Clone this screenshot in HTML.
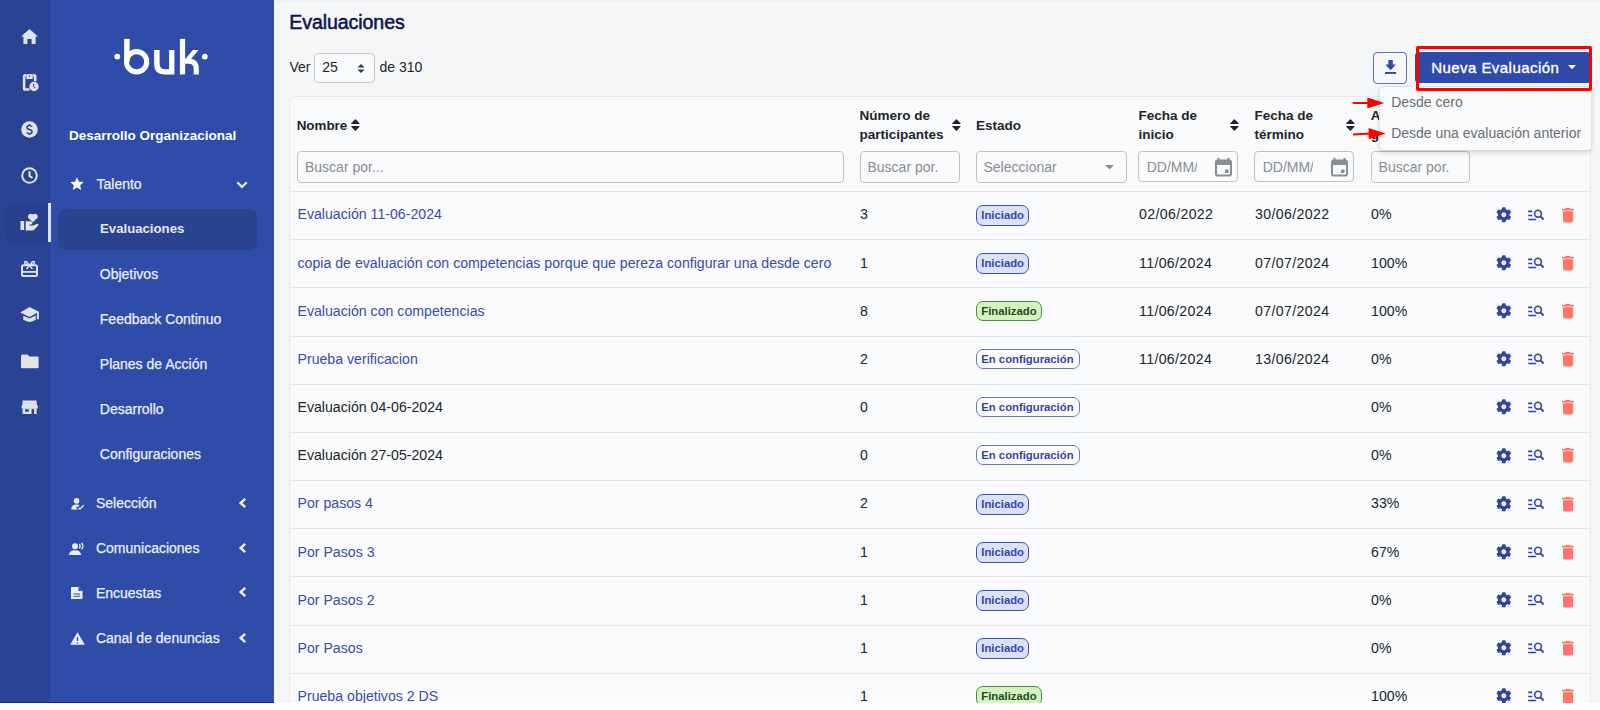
<!DOCTYPE html>
<html><head><meta charset="utf-8"><title>Evaluaciones</title>
<style>
html,body{margin:0;padding:0;width:1600px;height:710px;overflow:hidden;background:#fff}
body{position:relative;font-family:"Liberation Sans", sans-serif}
.t{position:absolute;white-space:nowrap;line-height:1;font-family:"Liberation Sans", sans-serif}
svg{overflow:visible}
</style></head><body>
<div style="position:absolute;left:0;top:0;width:1600px;height:703px;overflow:hidden">
<div style="position:absolute;left:0px;top:0px;width:1600px;height:710px;background:#ffffff"></div>
<div style="position:absolute;left:274px;top:0px;width:1326px;height:703px;background:#f5f6f8"></div>
<div style="position:absolute;left:274px;top:0px;width:1326px;height:1.5px;background:#eeeff2"></div>
<div style="position:absolute;left:274px;top:0px;width:2px;height:703px;background:#fafbfc"></div>
<div style="position:absolute;left:0px;top:0px;width:50px;height:703px;background:#2b4394"></div>
<div style="position:absolute;left:50px;top:0px;width:224px;height:703px;background:#2f4da8"></div>
<div style="position:absolute;left:0px;top:702px;width:274px;height:1px;background:#0c22a0"></div>
<div style="position:absolute;left:5px;top:203px;width:43px;height:39px;background:#283f8c;border-radius:8px 0 0 8px"></div>
<div style="position:absolute;left:47.5px;top:203px;width:3px;height:39px;background:#dfe1e6"></div>
<svg style="position:absolute;left:21px;top:29px;" width="17" height="15" viewBox="0 0 17 15"><path d="M8.5 0 L17 7.6 H14.6 V15 H10.6 V10 H6.4 V15 H2.4 V7.6 H0 Z" fill="#e1e3ea"/></svg>
<svg style="position:absolute;left:16px;top:66px;" width="28" height="32" viewBox="0 0 28 32"><path d="M13.5 23.5 H9.4 Q8.1 23.5 8.1 22.2 V10.5 Q8.1 9.2 9.4 9.2 H10.5 M16.6 9.2 H17.9 Q19.2 9.2 19.2 10.5 V15.3" fill="none" stroke="#e1e3ea" stroke-width="2.6"/><path d="M10.4 13.1 V9.5 Q10.4 7.9 12 7.9 H15.1 Q16.7 7.9 16.7 9.5 V13.1 Z" fill="#e1e3ea"/><circle cx="13.55" cy="10" r="0.75" fill="#2b4394"/><circle cx="18" cy="20.5" r="4.7" fill="#e1e3ea"/><path d="M17.6 17.8 V20.8 L19.4 22.2" fill="none" stroke="#2b4394" stroke-width="1"/></svg>
<svg style="position:absolute;left:21px;top:121px;" width="17" height="17" viewBox="0 0 17 17"><circle cx="8.5" cy="8.5" r="8.3" fill="#e1e3ea"/><path d="M10.9 5.6 Q10.2 4.4 8.4 4.4 Q6 4.4 6 6.4 Q6 8 8.5 8.5 Q11 9 11 10.7 Q11 12.7 8.5 12.7 Q6.6 12.7 5.9 11.4 M8.5 3 V4.4 M8.5 12.7 V14" fill="none" stroke="#2b4394" stroke-width="1.5"/></svg>
<svg style="position:absolute;left:21px;top:167px;" width="17" height="17" viewBox="0 0 17 17"><circle cx="8.5" cy="8.5" r="7.3" fill="none" stroke="#e1e3ea" stroke-width="2"/><path d="M8.5 4.3 V9 L11.5 11" fill="none" stroke="#e1e3ea" stroke-width="2"/></svg>
<svg style="position:absolute;left:16px;top:208px;" width="28" height="28" viewBox="0 0 28 28"><path d="M16.85 14.3 L12.2 9.9 A2.95 2.95 0 0 1 16.85 6.5 A2.95 2.95 0 0 1 21.5 9.9 Z" fill="#e1e3ea"/><rect x="4.5" y="13" width="3.6" height="9.1" rx="0.4" fill="#e1e3ea"/><path d="M9.7 13.2 H14.4 Q16.4 13.3 16.4 15.1 Q16.3 16.6 14.8 16.6 H13.4 V17.5 H17.6 L20.4 15.9 Q21.7 15.3 22.3 16.3 Q22.7 17.2 21.8 18.1 L18.4 21.4 Q17.4 22.5 16 22.5 H9.7 Z" fill="#e1e3ea"/></svg>
<svg style="position:absolute;left:21px;top:260px;" width="17" height="17" viewBox="0 0 17 17"><rect x="1" y="5.2" width="15" height="10.8" rx="1.5" fill="none" stroke="#e1e3ea" stroke-width="2"/><rect x="1" y="11" width="15" height="1.8" fill="#e1e3ea"/><path d="M8.5 5.5 L5.8 2 Q4.7 0.8 3.8 1.8 Q3 2.8 4.2 3.8 L8.5 5.5 L12.8 3.8 Q14 2.8 13.2 1.8 Q12.3 0.8 11.2 2 Z M8.5 5.5 L5.5 9 M8.5 5.5 L11.5 9" fill="none" stroke="#e1e3ea" stroke-width="1.4"/></svg>
<svg style="position:absolute;left:16px;top:300px;" width="28" height="28" viewBox="0 0 28 28"><path d="M13.6 6.9 L22.9 11.7 L13.6 17 L4.3 12.6 Z" fill="#e1e3ea"/><rect x="20.9" y="11.8" width="2" height="7.5" fill="#e1e3ea"/><path d="M7.3 15.8 L13.6 18.6 L19.7 15.6 V19.8 Q13.6 24 7.3 19.8 Z" fill="#e1e3ea"/></svg>
<svg style="position:absolute;left:21px;top:354px;" width="18" height="15" viewBox="0 0 18 15"><path d="M0 2 Q0 0.5 1.5 0.5 H6.5 L8.5 2.6 H16.3 Q17.6 2.6 17.6 4 V13 Q17.6 14.3 16.3 14.3 H1.5 Q0 14.3 0 13 Z" fill="#e1e3ea"/></svg>
<svg style="position:absolute;left:18px;top:396px;" width="24" height="22" viewBox="0 0 24 22"><path d="M4.6 4.6 H18.6 V7.4 L19.8 10.4 V12.4 H3.6 V10.4 L4.6 7.4 Z" fill="#e1e3ea"/><path d="M4.6 12.2 H18.6 V18 H4.6 Z M7.1 13.3 V15.8 H10.8 V13.3 Z M13.6 13 V18 H16.1 V13 Z" fill="#e1e3ea" fill-rule="evenodd"/><rect x="4.6" y="7.1" width="14" height="0.5" fill="#c9cde0"/></svg>
<svg style="position:absolute;left:100px;top:30px;" width="130" height="60" viewBox="0 0 130 60"><circle cx="17.3" cy="26.6" r="2.9" fill="#ffffff"/><circle cx="104.8" cy="26.6" r="2.9" fill="#ffffff"/><rect x="24.1" y="8.9" width="5.5" height="23" fill="#ffffff"/><circle cx="36.6" cy="31.75" r="10.15" fill="none" stroke="#ffffff" stroke-width="5.1"/><path d="M54.1 19.9 H59.6 V33.5 Q59.6 39.2 64.6 39.2 H69.1 V19.9 H74.4 V44.4 H64.4 Q54.1 44.4 54.1 34 Z" fill="#ffffff"/><rect x="79.9" y="8.9" width="5.2" height="35.5" fill="#ffffff"/><path d="M85 29.4 L92.8 19.9 H98.6 L89.6 30.6 Z" fill="#ffffff"/><path d="M85 28.8 H89 Q98.9 28.8 98.9 38.5 V44.4 H93.7 V38.8 Q93.7 33.8 88.8 33.8 H85 Z" fill="#ffffff"/></svg>
<div class="t" style="left:69px;top:128.57px;font-size:13.5px;font-weight:700;color:#ffffff;">Desarrollo Organizacional</div>
<svg style="position:absolute;left:70px;top:177px;" width="14" height="14" viewBox="0 0 14 14"><path d="M7 0.3 L8.9 4.7 L13.7 5.1 L10.1 8.3 L11.2 13 L7 10.5 L2.8 13 L3.9 8.3 L0.3 5.1 L5.1 4.7 Z" fill="#ffffff"/></svg>
<div class="t" style="left:96.5px;top:177.15px;font-size:14px;font-weight:400;color:#eceef5;-webkit-text-stroke:0.25px #eceef5">Talento</div>
<svg style="position:absolute;left:235.5px;top:180.5px;" width="12" height="8" viewBox="0 0 12 8"><path d="M1.3 1.3 L6 6 L10.7 1.3" fill="none" stroke="#eceef5" stroke-width="2.2"/></svg>
<div style="position:absolute;left:58px;top:209px;width:199px;height:41px;background:#2a4391;border-radius:8px"></div>
<div class="t" style="left:100px;top:221.83px;font-size:13.2px;font-weight:700;color:#e4e6ee;">Evaluaciones</div>
<div class="t" style="left:99.8px;top:267.35px;font-size:14px;font-weight:400;color:#eceef5;-webkit-text-stroke:0.25px #eceef5">Objetivos</div>
<div class="t" style="left:99.8px;top:311.95px;font-size:14px;font-weight:400;color:#eceef5;-webkit-text-stroke:0.25px #eceef5">Feedback Continuo</div>
<div class="t" style="left:99.8px;top:357.05px;font-size:14px;font-weight:400;color:#eceef5;-webkit-text-stroke:0.25px #eceef5">Planes de Acción</div>
<div class="t" style="left:99.8px;top:401.95px;font-size:14px;font-weight:400;color:#eceef5;-webkit-text-stroke:0.25px #eceef5">Desarrollo</div>
<div class="t" style="left:99.8px;top:446.95px;font-size:14px;font-weight:400;color:#eceef5;-webkit-text-stroke:0.25px #eceef5">Configuraciones</div>
<div class="t" style="left:95.9px;top:496.35px;font-size:14px;font-weight:400;color:#eceef5;-webkit-text-stroke:0.25px #eceef5">Selección</div>
<svg style="position:absolute;left:237.5px;top:498.0px;" width="9" height="10" viewBox="0 0 9 10"><path d="M7.2 0.9 L2.6 5 L7.2 9.1" fill="none" stroke="#eceef5" stroke-width="2.4"/></svg>
<div class="t" style="left:95.9px;top:541.45px;font-size:14px;font-weight:400;color:#eceef5;-webkit-text-stroke:0.25px #eceef5">Comunicaciones</div>
<svg style="position:absolute;left:237.5px;top:543.0999999999999px;" width="9" height="10" viewBox="0 0 9 10"><path d="M7.2 0.9 L2.6 5 L7.2 9.1" fill="none" stroke="#eceef5" stroke-width="2.4"/></svg>
<div class="t" style="left:95.9px;top:585.75px;font-size:14px;font-weight:400;color:#eceef5;-webkit-text-stroke:0.25px #eceef5">Encuestas</div>
<svg style="position:absolute;left:237.5px;top:587.4px;" width="9" height="10" viewBox="0 0 9 10"><path d="M7.2 0.9 L2.6 5 L7.2 9.1" fill="none" stroke="#eceef5" stroke-width="2.4"/></svg>
<div class="t" style="left:95.9px;top:631.25px;font-size:14px;font-weight:400;color:#eceef5;-webkit-text-stroke:0.25px #eceef5">Canal de denuncias</div>
<svg style="position:absolute;left:237.5px;top:632.9px;" width="9" height="10" viewBox="0 0 9 10"><path d="M7.2 0.9 L2.6 5 L7.2 9.1" fill="none" stroke="#eceef5" stroke-width="2.4"/></svg>
<svg style="position:absolute;left:70.5px;top:497.8px;" width="14" height="11.5" viewBox="0 0 14 12"><circle cx="5.5" cy="3" r="2.9" fill="#eceef5"/><path d="M0 11.5 Q0 6.8 5.5 6.8 Q7.5 6.8 8.5 7.4 L7 9.5 L6.2 8.8 L5 10 L7 12 H0 Z" fill="#eceef5"/><path d="M7.5 10 L9 11.5 L13 7.5" fill="none" stroke="#eceef5" stroke-width="1.3"/></svg>
<svg style="position:absolute;left:69px;top:542.5px;" width="16" height="12" viewBox="0 0 16 12"><circle cx="6" cy="3.3" r="3" fill="#eceef5"/><path d="M0 12 Q0 7.3 6 7.3 Q12 7.3 12 12 Z" fill="#eceef5"/><path d="M10.3 1 Q12 3.2 10.3 5.4 M12.6 0 Q15.2 3.2 12.6 6.4" fill="none" stroke="#eceef5" stroke-width="1.3"/></svg>
<svg style="position:absolute;left:70.8px;top:586.8px;" width="12" height="12" viewBox="0 0 12 12"><path d="M0 0.5 Q0 0 0.5 0 H7.5 L11.5 4 V11.5 Q11.5 12 11 12 H0.5 Q0 12 0 11.5 Z" fill="#eceef5"/><path d="M7.5 0 V4 H11.5" fill="#2f4da8"/><path d="M2.5 7 H9 M2.5 9.3 H9" stroke="#2f4da8" stroke-width="1"/></svg>
<svg style="position:absolute;left:69.5px;top:631.5px;" width="15" height="13" viewBox="0 0 15 13"><path d="M7.5 0.3 L14.8 12.8 H0.2 Z" fill="#eceef5"/><path d="M7.5 5 V9 M7.5 10.2 V11.4" stroke="#2f4da8" stroke-width="1.3"/></svg>
<div class="t" style="left:289.3px;top:12.51px;font-size:19.6px;font-weight:400;color:#0f1650;letter-spacing:-0.1px;-webkit-text-stroke:0.55px #0f1650">Evaluaciones</div>
<div class="t" style="left:289.5px;top:59.75px;font-size:14px;font-weight:400;color:#212529;">Ver</div>
<div style="position:absolute;left:313.5px;top:52.5px;width:61.8px;height:30.8px;box-sizing:border-box;border:1px solid #c4c6ca;border-radius:4px;background:#f9fafc"></div>
<div class="t" style="left:322.3px;top:60.15px;font-size:14px;font-weight:400;color:#212529;">25</div>
<svg style="position:absolute;left:356.5px;top:64px;" width="8" height="9" viewBox="0 0 8 9"><path d="M4 0 L7.5 3.6 H0.5 Z M4 9 L7.5 5.4 H0.5 Z" fill="#343a40"/></svg>
<div class="t" style="left:379.5px;top:59.75px;font-size:14px;font-weight:400;color:#212529;">de 310</div>
<div style="position:absolute;left:1373.4px;top:52.2px;width:33.8px;height:31.7px;box-sizing:border-box;border:1px solid #5b6fc4;border-radius:4px;background:#f6f7fb"></div>
<svg style="position:absolute;left:1384px;top:60px;" width="14" height="14" viewBox="0 0 14 14"><path d="M4.4 0.1 H8.8 V4.4 H11.9 L6.6 10.3 L1.3 4.4 H4.4 Z" fill="#2f4aa8"/><rect x="1" y="12" width="11.2" height="1.9" fill="#2f4aa8"/></svg>
<div style="position:absolute;left:1415px;top:51.6px;width:174.2px;height:31.7px;background:#2f4aa8;border-radius:4px 1px 1px 4px"></div>
<div class="t" style="left:1431.2px;top:59.90px;font-size:15px;font-weight:400;color:#ffffff;letter-spacing:0.45px;-webkit-text-stroke:0.35px #fff">Nueva Evaluación</div>
<svg style="position:absolute;left:1568px;top:64.5px;" width="8" height="5" viewBox="0 0 8 5"><path d="M0 0 H8 L4 4.2 Z" fill="#fff"/></svg>
<div style="position:absolute;left:288.5px;top:96.2px;width:1302.4px;height:620px;box-sizing:border-box;border:1px solid #e6e8ec;border-radius:8px;background:#f9fafc"></div>
<div class="t" style="left:296.7px;top:118.96px;font-size:13.4px;font-weight:700;color:#212529;">Nombre</div>
<svg style="position:absolute;left:351px;top:119.1px;" width="8.8" height="12" viewBox="0 0 8.8 12"><path d="M4.4 0.2 Q4.1 0.2 3.9 0.5 L0.1 4.6 Q-0.1 5 0.4 5 H8.4 Q8.9 5 8.7 4.6 L4.9 0.5 Q4.7 0.2 4.4 0.2 Z M4.4 11.8 Q4.1 11.8 3.9 11.5 L0.1 7.4 Q-0.1 7 0.4 7 H8.4 Q8.9 7 8.7 7.4 L4.9 11.5 Q4.7 11.8 4.4 11.8 Z" fill="#212529"/></svg>
<div class="t" style="left:859.5px;top:109.07px;font-size:13.5px;font-weight:700;color:#212529;">Número de</div>
<div class="t" style="left:859.5px;top:127.87px;font-size:13.5px;font-weight:700;color:#212529;">participantes</div>
<svg style="position:absolute;left:951.8px;top:119px;" width="8.8" height="12" viewBox="0 0 8.8 12"><path d="M4.4 0.2 Q4.1 0.2 3.9 0.5 L0.1 4.6 Q-0.1 5 0.4 5 H8.4 Q8.9 5 8.7 4.6 L4.9 0.5 Q4.7 0.2 4.4 0.2 Z M4.4 11.8 Q4.1 11.8 3.9 11.5 L0.1 7.4 Q-0.1 7 0.4 7 H8.4 Q8.9 7 8.7 7.4 L4.9 11.5 Q4.7 11.8 4.4 11.8 Z" fill="#212529"/></svg>
<div class="t" style="left:976px;top:118.77px;font-size:13.5px;font-weight:700;color:#212529;">Estado</div>
<div class="t" style="left:1138.5px;top:109.27px;font-size:13.5px;font-weight:700;color:#212529;">Fecha de</div>
<div class="t" style="left:1138.5px;top:127.87px;font-size:13.5px;font-weight:700;color:#212529;">inicio</div>
<svg style="position:absolute;left:1230.4px;top:119px;" width="8.8" height="12" viewBox="0 0 8.8 12"><path d="M4.4 0.2 Q4.1 0.2 3.9 0.5 L0.1 4.6 Q-0.1 5 0.4 5 H8.4 Q8.9 5 8.7 4.6 L4.9 0.5 Q4.7 0.2 4.4 0.2 Z M4.4 11.8 Q4.1 11.8 3.9 11.5 L0.1 7.4 Q-0.1 7 0.4 7 H8.4 Q8.9 7 8.7 7.4 L4.9 11.5 Q4.7 11.8 4.4 11.8 Z" fill="#212529"/></svg>
<div class="t" style="left:1254.5px;top:109.27px;font-size:13.5px;font-weight:700;color:#212529;">Fecha de</div>
<div class="t" style="left:1254.5px;top:127.87px;font-size:13.5px;font-weight:700;color:#212529;">término</div>
<svg style="position:absolute;left:1346.4px;top:119px;" width="8.8" height="12" viewBox="0 0 8.8 12"><path d="M4.4 0.2 Q4.1 0.2 3.9 0.5 L0.1 4.6 Q-0.1 5 0.4 5 H8.4 Q8.9 5 8.7 4.6 L4.9 0.5 Q4.7 0.2 4.4 0.2 Z M4.4 11.8 Q4.1 11.8 3.9 11.5 L0.1 7.4 Q-0.1 7 0.4 7 H8.4 Q8.9 7 8.7 7.4 L4.9 11.5 Q4.7 11.8 4.4 11.8 Z" fill="#212529"/></svg>
<div class="t" style="left:1370.8px;top:109.27px;font-size:13.5px;font-weight:700;color:#212529;">Avance</div>
<div class="t" style="left:1370.8px;top:127.87px;font-size:13.5px;font-weight:700;color:#212529;">general</div>
<div style="position:absolute;left:297px;top:151.3px;width:547px;height:31.7px;box-sizing:border-box;border:1px solid #bfc1c5;border-radius:4px;background:#f9fafc"></div>
<div class="t" style="left:305px;top:160.35px;font-size:14px;font-weight:400;color:#8a8d92;">Buscar por...</div>
<div style="position:absolute;left:859.5px;top:151.3px;width:100.8px;height:31.7px;box-sizing:border-box;border:1px solid #bfc1c5;border-radius:4px;background:#f9fafc"></div>
<div class="t" style="left:867.5px;top:160.35px;font-size:14px;font-weight:400;color:#8a8d92;">Buscar por.</div>
<div style="position:absolute;left:975.5px;top:151.3px;width:151.2px;height:31.7px;box-sizing:border-box;border:1px solid #bfc1c5;border-radius:4px;background:#f9fafc"></div>
<div class="t" style="left:983.5px;top:160.35px;font-size:14px;font-weight:400;color:#8a8d92;">Seleccionar</div>
<svg style="position:absolute;left:1104.5px;top:165px;" width="9" height="5" viewBox="0 0 9 5"><path d="M0 0 H9 L4.5 4.6 Z" fill="#8a8d92"/></svg>
<div style="position:absolute;left:1138.3px;top:151.3px;width:100.2px;height:31.2px;box-sizing:border-box;border:1px solid #bfc1c5;border-radius:4px;background:#f9fafc"></div>
<div style="position:absolute;left:1146.7px;top:160px;width:50px;height:16px;overflow:hidden"><div class="t" style="left:0;top:0.35px;font-size:14px;color:#8a8d92">DD/MM/AAAA</div></div>
<svg style="position:absolute;left:1214.8px;top:157.5px;" width="17" height="18.5" viewBox="0 0 17 18.5"><path d="M3.5 0 V3 M13.5 0 V3" stroke="#8a8d92" stroke-width="2.2"/><rect x="1" y="2.5" width="15" height="15" rx="1.8" fill="none" stroke="#8a8d92" stroke-width="2"/><rect x="1" y="2.5" width="15" height="4.5" fill="#8a8d92"/><rect x="10" y="11.5" width="3.5" height="3.5" fill="#8a8d92"/></svg>
<div style="position:absolute;left:1254.3px;top:151.3px;width:100.2px;height:31.2px;box-sizing:border-box;border:1px solid #bfc1c5;border-radius:4px;background:#f9fafc"></div>
<div style="position:absolute;left:1262.7px;top:160px;width:50px;height:16px;overflow:hidden"><div class="t" style="left:0;top:0.35px;font-size:14px;color:#8a8d92">DD/MM/AAAA</div></div>
<svg style="position:absolute;left:1330.8px;top:157.5px;" width="17" height="18.5" viewBox="0 0 17 18.5"><path d="M3.5 0 V3 M13.5 0 V3" stroke="#8a8d92" stroke-width="2.2"/><rect x="1" y="2.5" width="15" height="15" rx="1.8" fill="none" stroke="#8a8d92" stroke-width="2"/><rect x="1" y="2.5" width="15" height="4.5" fill="#8a8d92"/><rect x="10" y="11.5" width="3.5" height="3.5" fill="#8a8d92"/></svg>
<div style="position:absolute;left:1370.6px;top:151.3px;width:99.9px;height:31.7px;box-sizing:border-box;border:1px solid #bfc1c5;border-radius:4px;background:#f9fafc"></div>
<div class="t" style="left:1378.6px;top:160.35px;font-size:14px;font-weight:400;color:#8a8d92;">Buscar por.</div>
<div style="position:absolute;left:289.5px;top:191.0px;width:1300.5px;height:1px;background:#e3e5e9"></div>
<div class="t" style="left:297.5px;top:207.42px;font-size:14.15px;font-weight:400;color:#3a4da6;">Evaluación 11-06-2024</div>
<div class="t" style="left:860px;top:207.42px;font-size:14.15px;font-weight:400;color:#212529;">3</div>
<div style="position:absolute;left:976.2px;top:204.9px;width:53.1px;height:21px;box-sizing:border-box;border:1px solid #3f54b0;border-radius:7px;background:#dbe2f8"></div>
<div class="t" style="left:981.3px;top:209.53px;font-size:11.3px;font-weight:700;color:#3447a6;">Iniciado</div>
<div class="t" style="left:1139px;top:207.42px;font-size:14.15px;font-weight:400;color:#212529;letter-spacing:0.35px">02/06/2022</div>
<div class="t" style="left:1255.1px;top:207.42px;font-size:14.15px;font-weight:400;color:#212529;letter-spacing:0.35px">30/06/2022</div>
<div class="t" style="left:1371.1px;top:207.42px;font-size:14.15px;font-weight:400;color:#212529;">0%</div>
<svg style="position:absolute;left:1495.85px;top:206.7px;" width="15.6" height="15.6" viewBox="0 0 512 512"><path d="M487.4 315.7l-42.6-24.6c4.3-23.2 4.3-47 0-70.2l42.6-24.6c4.9-2.8 7.1-8.6 5.5-14-11.1-35.6-30-67.8-54.7-94.6-3.8-4.1-10-5.1-14.8-2.3L380.8 110c-17.9-15.4-38.5-27.3-60.8-35.1V25.8c0-5.6-3.9-10.5-9.4-11.7-36.7-8.200-74.3-7.8-109.2 0-5.5 1.2-9.4 6.1-9.4 11.7V75c-22.2 7.9-42.8 19.8-60.8 35.1L88.7 85.5c-4.9-2.8-11-1.9-14.8 2.3-24.7 26.7-43.6 58.9-54.7 94.6-1.7 5.4.6 11.2 5.5 14L67.3 221c-4.3 23.2-4.3 47 0 70.2l-42.6 24.6c-4.9 2.8-7.1 8.6-5.5 14 11.1 35.6 30 67.8 54.7 94.6 3.8 4.1 10 5.100 14.8 2.3l42.6-24.6c17.9 15.4 38.5 27.3 60.8 35.1v49.2c0 5.6 3.9 10.5 9.4 11.7 36.7 8.2 74.3 7.8 109.2 0 5.5-1.2 9.4-6.1 9.4-11.7v-49.2c22.2-7.9 42.8-19.8 60.8-35.1l42.6 24.6c4.9 2.8 11 1.9 14.8-2.3 24.7-26.7 43.6-58.9 54.7-94.6 1.5-5.5-.7-11.3-5.6-14.1zM256 336c-44.1 0-80-35.9-80-80s35.9-80 80-80 80 35.9 80 80-35.9 80-80 80z" fill="#2d45a6"/></svg>
<svg style="position:absolute;left:1527.5px;top:209.6px;" width="17" height="11" viewBox="0 0 17 11"><path d="M0.2 1.4 H4.2 M0.2 5.5 H4.2 M0.2 9.5 H8.1" stroke="#2d45a6" stroke-width="1.6"/><circle cx="10" cy="3.7" r="3.4" fill="none" stroke="#2d45a6" stroke-width="1.6"/><path d="M12.4 6.3 L15.6 9.5" stroke="#2d45a6" stroke-width="1.8"/></svg>
<svg style="position:absolute;left:1562px;top:207.5px;" width="12" height="14.6" viewBox="0 0 12 14.6"><rect x="3.3" y="0" width="5" height="1.6" rx="0.7" fill="#fe7469"/><rect x="0" y="0.8" width="11.8" height="1.8" rx="0.6" fill="#fe7469"/><path d="M1 3.2 H11.1 V12.4 Q11.1 14.5 9 14.5 H3.1 Q1 14.5 1 12.4 Z" fill="#fe7469"/></svg>
<div style="position:absolute;left:289.5px;top:239.17000000000002px;width:1300.5px;height:1px;background:#e3e5e9"></div>
<div class="t" style="left:297.5px;top:255.59px;font-size:14.15px;font-weight:400;color:#3a4da6;">copia de evaluación con competencias porque que pereza configurar una desde cero</div>
<div class="t" style="left:860px;top:255.59px;font-size:14.15px;font-weight:400;color:#212529;">1</div>
<div style="position:absolute;left:976.2px;top:253.07px;width:53.1px;height:21px;box-sizing:border-box;border:1px solid #3f54b0;border-radius:7px;background:#dbe2f8"></div>
<div class="t" style="left:981.3px;top:257.70px;font-size:11.3px;font-weight:700;color:#3447a6;">Iniciado</div>
<div class="t" style="left:1139px;top:255.59px;font-size:14.15px;font-weight:400;color:#212529;letter-spacing:0.35px">11/06/2024</div>
<div class="t" style="left:1255.1px;top:255.59px;font-size:14.15px;font-weight:400;color:#212529;letter-spacing:0.35px">07/07/2024</div>
<div class="t" style="left:1371.1px;top:255.59px;font-size:14.15px;font-weight:400;color:#212529;">100%</div>
<svg style="position:absolute;left:1495.85px;top:254.86999999999998px;" width="15.6" height="15.6" viewBox="0 0 512 512"><path d="M487.4 315.7l-42.6-24.6c4.3-23.2 4.3-47 0-70.2l42.6-24.6c4.9-2.8 7.1-8.6 5.5-14-11.1-35.6-30-67.8-54.7-94.6-3.8-4.1-10-5.1-14.8-2.3L380.8 110c-17.9-15.4-38.5-27.3-60.8-35.1V25.8c0-5.6-3.9-10.5-9.4-11.7-36.7-8.200-74.3-7.8-109.2 0-5.5 1.2-9.4 6.1-9.4 11.7V75c-22.2 7.9-42.8 19.8-60.8 35.1L88.7 85.5c-4.9-2.8-11-1.9-14.8 2.3-24.7 26.7-43.6 58.9-54.7 94.6-1.7 5.4.6 11.2 5.5 14L67.3 221c-4.3 23.2-4.3 47 0 70.2l-42.6 24.6c-4.9 2.8-7.1 8.6-5.5 14 11.1 35.6 30 67.8 54.7 94.6 3.8 4.1 10 5.100 14.8 2.3l42.6-24.6c17.9 15.4 38.5 27.3 60.8 35.1v49.2c0 5.6 3.9 10.5 9.4 11.7 36.7 8.2 74.3 7.8 109.2 0 5.5-1.2 9.4-6.1 9.4-11.7v-49.2c22.2-7.9 42.8-19.8 60.8-35.1l42.6 24.6c4.9 2.8 11 1.9 14.8-2.3 24.7-26.7 43.6-58.9 54.7-94.6 1.5-5.5-.7-11.3-5.6-14.1zM256 336c-44.1 0-80-35.9-80-80s35.9-80 80-80 80 35.9 80 80-35.9 80-80 80z" fill="#2d45a6"/></svg>
<svg style="position:absolute;left:1527.5px;top:257.77px;" width="17" height="11" viewBox="0 0 17 11"><path d="M0.2 1.4 H4.2 M0.2 5.5 H4.2 M0.2 9.5 H8.1" stroke="#2d45a6" stroke-width="1.6"/><circle cx="10" cy="3.7" r="3.4" fill="none" stroke="#2d45a6" stroke-width="1.6"/><path d="M12.4 6.3 L15.6 9.5" stroke="#2d45a6" stroke-width="1.8"/></svg>
<svg style="position:absolute;left:1562px;top:255.67px;" width="12" height="14.6" viewBox="0 0 12 14.6"><rect x="3.3" y="0" width="5" height="1.6" rx="0.7" fill="#fe7469"/><rect x="0" y="0.8" width="11.8" height="1.8" rx="0.6" fill="#fe7469"/><path d="M1 3.2 H11.1 V12.4 Q11.1 14.5 9 14.5 H3.1 Q1 14.5 1 12.4 Z" fill="#fe7469"/></svg>
<div style="position:absolute;left:289.5px;top:287.34000000000003px;width:1300.5px;height:1px;background:#e3e5e9"></div>
<div class="t" style="left:297.5px;top:303.76px;font-size:14.15px;font-weight:400;color:#3a4da6;">Evaluación con competencias</div>
<div class="t" style="left:860px;top:303.76px;font-size:14.15px;font-weight:400;color:#212529;">8</div>
<div style="position:absolute;left:976.4px;top:300.74px;width:65.3px;height:19.8px;box-sizing:border-box;border:1px solid #4f8a4b;border-radius:7px;background:#d4f4bf"></div>
<div class="t" style="left:981.3px;top:305.87px;font-size:11.3px;font-weight:700;color:#1f4a1f;">Finalizado</div>
<div class="t" style="left:1139px;top:303.76px;font-size:14.15px;font-weight:400;color:#212529;letter-spacing:0.35px">11/06/2024</div>
<div class="t" style="left:1255.1px;top:303.76px;font-size:14.15px;font-weight:400;color:#212529;letter-spacing:0.35px">07/07/2024</div>
<div class="t" style="left:1371.1px;top:303.76px;font-size:14.15px;font-weight:400;color:#212529;">100%</div>
<svg style="position:absolute;left:1495.85px;top:303.04px;" width="15.6" height="15.6" viewBox="0 0 512 512"><path d="M487.4 315.7l-42.6-24.6c4.3-23.2 4.3-47 0-70.2l42.6-24.6c4.9-2.8 7.1-8.6 5.5-14-11.1-35.6-30-67.8-54.7-94.6-3.8-4.1-10-5.1-14.8-2.3L380.8 110c-17.9-15.4-38.5-27.3-60.8-35.1V25.8c0-5.6-3.9-10.5-9.4-11.7-36.7-8.200-74.3-7.8-109.2 0-5.5 1.2-9.4 6.1-9.4 11.7V75c-22.2 7.9-42.8 19.8-60.8 35.1L88.7 85.5c-4.9-2.8-11-1.9-14.8 2.3-24.7 26.7-43.6 58.9-54.7 94.6-1.7 5.4.6 11.2 5.5 14L67.3 221c-4.3 23.2-4.3 47 0 70.2l-42.6 24.6c-4.9 2.8-7.1 8.6-5.5 14 11.1 35.6 30 67.8 54.7 94.6 3.8 4.1 10 5.100 14.8 2.3l42.6-24.6c17.9 15.4 38.5 27.3 60.8 35.1v49.2c0 5.6 3.9 10.5 9.4 11.7 36.7 8.2 74.3 7.8 109.2 0 5.5-1.2 9.4-6.1 9.4-11.7v-49.2c22.2-7.9 42.8-19.8 60.8-35.1l42.6 24.6c4.9 2.8 11 1.9 14.8-2.3 24.7-26.7 43.6-58.9 54.7-94.6 1.5-5.5-.7-11.3-5.6-14.1zM256 336c-44.1 0-80-35.9-80-80s35.9-80 80-80 80 35.9 80 80-35.9 80-80 80z" fill="#2d45a6"/></svg>
<svg style="position:absolute;left:1527.5px;top:305.94px;" width="17" height="11" viewBox="0 0 17 11"><path d="M0.2 1.4 H4.2 M0.2 5.5 H4.2 M0.2 9.5 H8.1" stroke="#2d45a6" stroke-width="1.6"/><circle cx="10" cy="3.7" r="3.4" fill="none" stroke="#2d45a6" stroke-width="1.6"/><path d="M12.4 6.3 L15.6 9.5" stroke="#2d45a6" stroke-width="1.8"/></svg>
<svg style="position:absolute;left:1562px;top:303.84px;" width="12" height="14.6" viewBox="0 0 12 14.6"><rect x="3.3" y="0" width="5" height="1.6" rx="0.7" fill="#fe7469"/><rect x="0" y="0.8" width="11.8" height="1.8" rx="0.6" fill="#fe7469"/><path d="M1 3.2 H11.1 V12.4 Q11.1 14.5 9 14.5 H3.1 Q1 14.5 1 12.4 Z" fill="#fe7469"/></svg>
<div style="position:absolute;left:289.5px;top:335.51px;width:1300.5px;height:1px;background:#e3e5e9"></div>
<div class="t" style="left:297.5px;top:351.93px;font-size:14.15px;font-weight:400;color:#3a4da6;">Prueba verificacion</div>
<div class="t" style="left:860px;top:351.93px;font-size:14.15px;font-weight:400;color:#212529;">2</div>
<div style="position:absolute;left:976.4px;top:348.90999999999997px;width:103.3px;height:20.2px;box-sizing:border-box;border:1px solid #6377c8;border-radius:7px;background:#fdfdff"></div>
<div class="t" style="left:981.3px;top:354.04px;font-size:11.3px;font-weight:700;color:#3246a4;">En configuración</div>
<div class="t" style="left:1139px;top:351.93px;font-size:14.15px;font-weight:400;color:#212529;letter-spacing:0.35px">11/06/2024</div>
<div class="t" style="left:1255.1px;top:351.93px;font-size:14.15px;font-weight:400;color:#212529;letter-spacing:0.35px">13/06/2024</div>
<div class="t" style="left:1371.1px;top:351.93px;font-size:14.15px;font-weight:400;color:#212529;">0%</div>
<svg style="position:absolute;left:1495.85px;top:351.21000000000004px;" width="15.6" height="15.6" viewBox="0 0 512 512"><path d="M487.4 315.7l-42.6-24.6c4.3-23.2 4.3-47 0-70.2l42.6-24.6c4.9-2.8 7.1-8.6 5.5-14-11.1-35.6-30-67.8-54.7-94.6-3.8-4.1-10-5.1-14.8-2.3L380.8 110c-17.9-15.4-38.5-27.3-60.8-35.1V25.8c0-5.6-3.9-10.5-9.4-11.7-36.7-8.200-74.3-7.8-109.2 0-5.5 1.2-9.4 6.1-9.4 11.7V75c-22.2 7.9-42.8 19.8-60.8 35.1L88.7 85.5c-4.9-2.8-11-1.9-14.8 2.3-24.7 26.7-43.6 58.9-54.7 94.6-1.7 5.4.6 11.2 5.5 14L67.3 221c-4.3 23.2-4.3 47 0 70.2l-42.6 24.6c-4.9 2.8-7.1 8.6-5.5 14 11.1 35.6 30 67.8 54.7 94.6 3.8 4.1 10 5.100 14.8 2.3l42.6-24.6c17.9 15.4 38.5 27.3 60.8 35.1v49.2c0 5.6 3.9 10.5 9.4 11.7 36.7 8.2 74.3 7.8 109.2 0 5.5-1.2 9.4-6.1 9.4-11.7v-49.2c22.2-7.9 42.8-19.8 60.8-35.1l42.6 24.6c4.9 2.8 11 1.9 14.8-2.3 24.7-26.7 43.6-58.9 54.7-94.6 1.5-5.5-.7-11.3-5.6-14.1zM256 336c-44.1 0-80-35.9-80-80s35.9-80 80-80 80 35.9 80 80-35.9 80-80 80z" fill="#2d45a6"/></svg>
<svg style="position:absolute;left:1527.5px;top:354.11px;" width="17" height="11" viewBox="0 0 17 11"><path d="M0.2 1.4 H4.2 M0.2 5.5 H4.2 M0.2 9.5 H8.1" stroke="#2d45a6" stroke-width="1.6"/><circle cx="10" cy="3.7" r="3.4" fill="none" stroke="#2d45a6" stroke-width="1.6"/><path d="M12.4 6.3 L15.6 9.5" stroke="#2d45a6" stroke-width="1.8"/></svg>
<svg style="position:absolute;left:1562px;top:352.01px;" width="12" height="14.6" viewBox="0 0 12 14.6"><rect x="3.3" y="0" width="5" height="1.6" rx="0.7" fill="#fe7469"/><rect x="0" y="0.8" width="11.8" height="1.8" rx="0.6" fill="#fe7469"/><path d="M1 3.2 H11.1 V12.4 Q11.1 14.5 9 14.5 H3.1 Q1 14.5 1 12.4 Z" fill="#fe7469"/></svg>
<div style="position:absolute;left:289.5px;top:383.68px;width:1300.5px;height:1px;background:#e3e5e9"></div>
<div class="t" style="left:297.5px;top:400.10px;font-size:14.15px;font-weight:400;color:#212529;">Evaluación 04-06-2024</div>
<div class="t" style="left:860px;top:400.10px;font-size:14.15px;font-weight:400;color:#212529;">0</div>
<div style="position:absolute;left:976.4px;top:397.08000000000004px;width:103.3px;height:20.2px;box-sizing:border-box;border:1px solid #6377c8;border-radius:7px;background:#fdfdff"></div>
<div class="t" style="left:981.3px;top:402.21px;font-size:11.3px;font-weight:700;color:#3246a4;">En configuración</div>
<div class="t" style="left:1371.1px;top:400.10px;font-size:14.15px;font-weight:400;color:#212529;">0%</div>
<svg style="position:absolute;left:1495.85px;top:399.38px;" width="15.6" height="15.6" viewBox="0 0 512 512"><path d="M487.4 315.7l-42.6-24.6c4.3-23.2 4.3-47 0-70.2l42.6-24.6c4.9-2.8 7.1-8.6 5.5-14-11.1-35.6-30-67.8-54.7-94.6-3.8-4.1-10-5.1-14.8-2.3L380.8 110c-17.9-15.4-38.5-27.3-60.8-35.1V25.8c0-5.6-3.9-10.5-9.4-11.7-36.7-8.200-74.3-7.8-109.2 0-5.5 1.2-9.4 6.1-9.4 11.7V75c-22.2 7.9-42.8 19.8-60.8 35.1L88.7 85.5c-4.9-2.8-11-1.9-14.8 2.3-24.7 26.7-43.6 58.9-54.7 94.6-1.7 5.4.6 11.2 5.5 14L67.3 221c-4.3 23.2-4.3 47 0 70.2l-42.6 24.6c-4.9 2.8-7.1 8.6-5.5 14 11.1 35.6 30 67.8 54.7 94.6 3.8 4.1 10 5.100 14.8 2.3l42.6-24.6c17.9 15.4 38.5 27.3 60.8 35.1v49.2c0 5.6 3.9 10.5 9.4 11.7 36.7 8.2 74.3 7.8 109.2 0 5.5-1.2 9.4-6.1 9.4-11.7v-49.2c22.2-7.9 42.8-19.8 60.8-35.1l42.6 24.6c4.9 2.8 11 1.9 14.8-2.3 24.7-26.7 43.6-58.9 54.7-94.6 1.5-5.5-.7-11.3-5.6-14.1zM256 336c-44.1 0-80-35.9-80-80s35.9-80 80-80 80 35.9 80 80-35.9 80-80 80z" fill="#2d45a6"/></svg>
<svg style="position:absolute;left:1527.5px;top:402.28px;" width="17" height="11" viewBox="0 0 17 11"><path d="M0.2 1.4 H4.2 M0.2 5.5 H4.2 M0.2 9.5 H8.1" stroke="#2d45a6" stroke-width="1.6"/><circle cx="10" cy="3.7" r="3.4" fill="none" stroke="#2d45a6" stroke-width="1.6"/><path d="M12.4 6.3 L15.6 9.5" stroke="#2d45a6" stroke-width="1.8"/></svg>
<svg style="position:absolute;left:1562px;top:400.17999999999995px;" width="12" height="14.6" viewBox="0 0 12 14.6"><rect x="3.3" y="0" width="5" height="1.6" rx="0.7" fill="#fe7469"/><rect x="0" y="0.8" width="11.8" height="1.8" rx="0.6" fill="#fe7469"/><path d="M1 3.2 H11.1 V12.4 Q11.1 14.5 9 14.5 H3.1 Q1 14.5 1 12.4 Z" fill="#fe7469"/></svg>
<div style="position:absolute;left:289.5px;top:431.85px;width:1300.5px;height:1px;background:#e3e5e9"></div>
<div class="t" style="left:297.5px;top:448.27px;font-size:14.15px;font-weight:400;color:#212529;">Evaluación 27-05-2024</div>
<div class="t" style="left:860px;top:448.27px;font-size:14.15px;font-weight:400;color:#212529;">0</div>
<div style="position:absolute;left:976.4px;top:445.25px;width:103.3px;height:20.2px;box-sizing:border-box;border:1px solid #6377c8;border-radius:7px;background:#fdfdff"></div>
<div class="t" style="left:981.3px;top:450.38px;font-size:11.3px;font-weight:700;color:#3246a4;">En configuración</div>
<div class="t" style="left:1371.1px;top:448.27px;font-size:14.15px;font-weight:400;color:#212529;">0%</div>
<svg style="position:absolute;left:1495.85px;top:447.55000000000007px;" width="15.6" height="15.6" viewBox="0 0 512 512"><path d="M487.4 315.7l-42.6-24.6c4.3-23.2 4.3-47 0-70.2l42.6-24.6c4.9-2.8 7.1-8.6 5.5-14-11.1-35.6-30-67.8-54.7-94.6-3.8-4.1-10-5.1-14.8-2.3L380.8 110c-17.9-15.4-38.5-27.3-60.8-35.1V25.8c0-5.6-3.9-10.5-9.4-11.7-36.7-8.200-74.3-7.8-109.2 0-5.5 1.2-9.4 6.1-9.4 11.7V75c-22.2 7.9-42.8 19.8-60.8 35.1L88.7 85.5c-4.9-2.8-11-1.9-14.8 2.3-24.7 26.7-43.6 58.9-54.7 94.6-1.7 5.4.6 11.2 5.5 14L67.3 221c-4.3 23.2-4.3 47 0 70.2l-42.6 24.6c-4.9 2.8-7.1 8.6-5.5 14 11.1 35.6 30 67.8 54.7 94.6 3.8 4.1 10 5.100 14.8 2.3l42.6-24.6c17.9 15.4 38.5 27.3 60.8 35.1v49.2c0 5.6 3.9 10.5 9.4 11.7 36.7 8.2 74.3 7.8 109.2 0 5.5-1.2 9.4-6.1 9.4-11.7v-49.2c22.2-7.9 42.8-19.8 60.8-35.1l42.6 24.6c4.9 2.8 11 1.9 14.8-2.3 24.7-26.7 43.6-58.9 54.7-94.6 1.5-5.5-.7-11.3-5.6-14.1zM256 336c-44.1 0-80-35.9-80-80s35.9-80 80-80 80 35.9 80 80-35.9 80-80 80z" fill="#2d45a6"/></svg>
<svg style="position:absolute;left:1527.5px;top:450.45000000000005px;" width="17" height="11" viewBox="0 0 17 11"><path d="M0.2 1.4 H4.2 M0.2 5.5 H4.2 M0.2 9.5 H8.1" stroke="#2d45a6" stroke-width="1.6"/><circle cx="10" cy="3.7" r="3.4" fill="none" stroke="#2d45a6" stroke-width="1.6"/><path d="M12.4 6.3 L15.6 9.5" stroke="#2d45a6" stroke-width="1.8"/></svg>
<svg style="position:absolute;left:1562px;top:448.35px;" width="12" height="14.6" viewBox="0 0 12 14.6"><rect x="3.3" y="0" width="5" height="1.6" rx="0.7" fill="#fe7469"/><rect x="0" y="0.8" width="11.8" height="1.8" rx="0.6" fill="#fe7469"/><path d="M1 3.2 H11.1 V12.4 Q11.1 14.5 9 14.5 H3.1 Q1 14.5 1 12.4 Z" fill="#fe7469"/></svg>
<div style="position:absolute;left:289.5px;top:480.02px;width:1300.5px;height:1px;background:#e3e5e9"></div>
<div class="t" style="left:297.5px;top:496.44px;font-size:14.15px;font-weight:400;color:#3a4da6;">Por pasos 4</div>
<div class="t" style="left:860px;top:496.44px;font-size:14.15px;font-weight:400;color:#212529;">2</div>
<div style="position:absolute;left:976.2px;top:493.91999999999996px;width:53.1px;height:21px;box-sizing:border-box;border:1px solid #3f54b0;border-radius:7px;background:#dbe2f8"></div>
<div class="t" style="left:981.3px;top:498.55px;font-size:11.3px;font-weight:700;color:#3447a6;">Iniciado</div>
<div class="t" style="left:1371.1px;top:496.44px;font-size:14.15px;font-weight:400;color:#212529;">33%</div>
<svg style="position:absolute;left:1495.85px;top:495.72px;" width="15.6" height="15.6" viewBox="0 0 512 512"><path d="M487.4 315.7l-42.6-24.6c4.3-23.2 4.3-47 0-70.2l42.6-24.6c4.9-2.8 7.1-8.6 5.5-14-11.1-35.6-30-67.8-54.7-94.6-3.8-4.1-10-5.1-14.8-2.3L380.8 110c-17.9-15.4-38.5-27.3-60.8-35.1V25.8c0-5.6-3.9-10.5-9.4-11.7-36.7-8.200-74.3-7.8-109.2 0-5.5 1.2-9.4 6.1-9.4 11.7V75c-22.2 7.9-42.8 19.8-60.8 35.1L88.7 85.5c-4.9-2.8-11-1.9-14.8 2.3-24.7 26.7-43.6 58.9-54.7 94.6-1.7 5.4.6 11.2 5.5 14L67.3 221c-4.3 23.2-4.3 47 0 70.2l-42.6 24.6c-4.9 2.8-7.1 8.6-5.5 14 11.1 35.6 30 67.8 54.7 94.6 3.8 4.1 10 5.100 14.8 2.3l42.6-24.6c17.9 15.4 38.5 27.3 60.8 35.1v49.2c0 5.6 3.9 10.5 9.4 11.7 36.7 8.2 74.3 7.8 109.2 0 5.5-1.2 9.4-6.1 9.4-11.7v-49.2c22.2-7.9 42.8-19.8 60.8-35.1l42.6 24.6c4.9 2.8 11 1.9 14.8-2.3 24.7-26.7 43.6-58.9 54.7-94.6 1.5-5.5-.7-11.3-5.6-14.1zM256 336c-44.1 0-80-35.9-80-80s35.9-80 80-80 80 35.9 80 80-35.9 80-80 80z" fill="#2d45a6"/></svg>
<svg style="position:absolute;left:1527.5px;top:498.62px;" width="17" height="11" viewBox="0 0 17 11"><path d="M0.2 1.4 H4.2 M0.2 5.5 H4.2 M0.2 9.5 H8.1" stroke="#2d45a6" stroke-width="1.6"/><circle cx="10" cy="3.7" r="3.4" fill="none" stroke="#2d45a6" stroke-width="1.6"/><path d="M12.4 6.3 L15.6 9.5" stroke="#2d45a6" stroke-width="1.8"/></svg>
<svg style="position:absolute;left:1562px;top:496.52px;" width="12" height="14.6" viewBox="0 0 12 14.6"><rect x="3.3" y="0" width="5" height="1.6" rx="0.7" fill="#fe7469"/><rect x="0" y="0.8" width="11.8" height="1.8" rx="0.6" fill="#fe7469"/><path d="M1 3.2 H11.1 V12.4 Q11.1 14.5 9 14.5 H3.1 Q1 14.5 1 12.4 Z" fill="#fe7469"/></svg>
<div style="position:absolute;left:289.5px;top:528.19px;width:1300.5px;height:1px;background:#e3e5e9"></div>
<div class="t" style="left:297.5px;top:544.61px;font-size:14.15px;font-weight:400;color:#3a4da6;">Por Pasos 3</div>
<div class="t" style="left:860px;top:544.61px;font-size:14.15px;font-weight:400;color:#212529;">1</div>
<div style="position:absolute;left:976.2px;top:542.09px;width:53.1px;height:21px;box-sizing:border-box;border:1px solid #3f54b0;border-radius:7px;background:#dbe2f8"></div>
<div class="t" style="left:981.3px;top:546.72px;font-size:11.3px;font-weight:700;color:#3447a6;">Iniciado</div>
<div class="t" style="left:1371.1px;top:544.61px;font-size:14.15px;font-weight:400;color:#212529;">67%</div>
<svg style="position:absolute;left:1495.85px;top:543.89px;" width="15.6" height="15.6" viewBox="0 0 512 512"><path d="M487.4 315.7l-42.6-24.6c4.3-23.2 4.3-47 0-70.2l42.6-24.6c4.9-2.8 7.1-8.6 5.5-14-11.1-35.6-30-67.8-54.7-94.6-3.8-4.1-10-5.1-14.8-2.3L380.8 110c-17.9-15.4-38.5-27.3-60.8-35.1V25.8c0-5.6-3.9-10.5-9.4-11.7-36.7-8.200-74.3-7.8-109.2 0-5.5 1.2-9.4 6.1-9.4 11.7V75c-22.2 7.9-42.8 19.8-60.8 35.1L88.7 85.5c-4.9-2.8-11-1.9-14.8 2.3-24.7 26.7-43.6 58.9-54.7 94.6-1.7 5.4.6 11.2 5.5 14L67.3 221c-4.3 23.2-4.3 47 0 70.2l-42.6 24.6c-4.9 2.8-7.1 8.6-5.5 14 11.1 35.6 30 67.8 54.7 94.6 3.8 4.1 10 5.100 14.8 2.3l42.6-24.6c17.9 15.4 38.5 27.3 60.8 35.1v49.2c0 5.6 3.9 10.5 9.4 11.7 36.7 8.2 74.3 7.8 109.2 0 5.5-1.2 9.4-6.1 9.4-11.7v-49.2c22.2-7.9 42.8-19.8 60.8-35.1l42.6 24.6c4.9 2.8 11 1.9 14.8-2.3 24.7-26.7 43.6-58.9 54.7-94.6 1.5-5.5-.7-11.3-5.6-14.1zM256 336c-44.1 0-80-35.9-80-80s35.9-80 80-80 80 35.9 80 80-35.9 80-80 80z" fill="#2d45a6"/></svg>
<svg style="position:absolute;left:1527.5px;top:546.79px;" width="17" height="11" viewBox="0 0 17 11"><path d="M0.2 1.4 H4.2 M0.2 5.5 H4.2 M0.2 9.5 H8.1" stroke="#2d45a6" stroke-width="1.6"/><circle cx="10" cy="3.7" r="3.4" fill="none" stroke="#2d45a6" stroke-width="1.6"/><path d="M12.4 6.3 L15.6 9.5" stroke="#2d45a6" stroke-width="1.8"/></svg>
<svg style="position:absolute;left:1562px;top:544.6899999999999px;" width="12" height="14.6" viewBox="0 0 12 14.6"><rect x="3.3" y="0" width="5" height="1.6" rx="0.7" fill="#fe7469"/><rect x="0" y="0.8" width="11.8" height="1.8" rx="0.6" fill="#fe7469"/><path d="M1 3.2 H11.1 V12.4 Q11.1 14.5 9 14.5 H3.1 Q1 14.5 1 12.4 Z" fill="#fe7469"/></svg>
<div style="position:absolute;left:289.5px;top:576.36px;width:1300.5px;height:1px;background:#e3e5e9"></div>
<div class="t" style="left:297.5px;top:592.78px;font-size:14.15px;font-weight:400;color:#3a4da6;">Por Pasos 2</div>
<div class="t" style="left:860px;top:592.78px;font-size:14.15px;font-weight:400;color:#212529;">1</div>
<div style="position:absolute;left:976.2px;top:590.26px;width:53.1px;height:21px;box-sizing:border-box;border:1px solid #3f54b0;border-radius:7px;background:#dbe2f8"></div>
<div class="t" style="left:981.3px;top:594.89px;font-size:11.3px;font-weight:700;color:#3447a6;">Iniciado</div>
<div class="t" style="left:1371.1px;top:592.78px;font-size:14.15px;font-weight:400;color:#212529;">0%</div>
<svg style="position:absolute;left:1495.85px;top:592.0600000000001px;" width="15.6" height="15.6" viewBox="0 0 512 512"><path d="M487.4 315.7l-42.6-24.6c4.3-23.2 4.3-47 0-70.2l42.6-24.6c4.9-2.8 7.1-8.6 5.5-14-11.1-35.6-30-67.8-54.7-94.6-3.8-4.1-10-5.1-14.8-2.3L380.8 110c-17.9-15.4-38.5-27.3-60.8-35.1V25.8c0-5.6-3.9-10.5-9.4-11.7-36.7-8.200-74.3-7.8-109.2 0-5.5 1.2-9.4 6.1-9.4 11.7V75c-22.2 7.9-42.8 19.8-60.8 35.1L88.7 85.5c-4.9-2.8-11-1.9-14.8 2.3-24.7 26.7-43.6 58.9-54.7 94.6-1.7 5.4.6 11.2 5.5 14L67.3 221c-4.3 23.2-4.3 47 0 70.2l-42.6 24.6c-4.9 2.8-7.1 8.6-5.5 14 11.1 35.6 30 67.8 54.7 94.6 3.8 4.1 10 5.100 14.8 2.3l42.6-24.6c17.9 15.4 38.5 27.3 60.8 35.1v49.2c0 5.6 3.9 10.5 9.4 11.7 36.7 8.2 74.3 7.8 109.2 0 5.5-1.2 9.4-6.1 9.4-11.7v-49.2c22.2-7.9 42.8-19.8 60.8-35.1l42.6 24.6c4.9 2.8 11 1.9 14.8-2.3 24.7-26.7 43.6-58.9 54.7-94.6 1.5-5.5-.7-11.3-5.6-14.1zM256 336c-44.1 0-80-35.9-80-80s35.9-80 80-80 80 35.9 80 80-35.9 80-80 80z" fill="#2d45a6"/></svg>
<svg style="position:absolute;left:1527.5px;top:594.96px;" width="17" height="11" viewBox="0 0 17 11"><path d="M0.2 1.4 H4.2 M0.2 5.5 H4.2 M0.2 9.5 H8.1" stroke="#2d45a6" stroke-width="1.6"/><circle cx="10" cy="3.7" r="3.4" fill="none" stroke="#2d45a6" stroke-width="1.6"/><path d="M12.4 6.3 L15.6 9.5" stroke="#2d45a6" stroke-width="1.8"/></svg>
<svg style="position:absolute;left:1562px;top:592.86px;" width="12" height="14.6" viewBox="0 0 12 14.6"><rect x="3.3" y="0" width="5" height="1.6" rx="0.7" fill="#fe7469"/><rect x="0" y="0.8" width="11.8" height="1.8" rx="0.6" fill="#fe7469"/><path d="M1 3.2 H11.1 V12.4 Q11.1 14.5 9 14.5 H3.1 Q1 14.5 1 12.4 Z" fill="#fe7469"/></svg>
<div style="position:absolute;left:289.5px;top:624.53px;width:1300.5px;height:1px;background:#e3e5e9"></div>
<div class="t" style="left:297.5px;top:640.95px;font-size:14.15px;font-weight:400;color:#3a4da6;">Por Pasos</div>
<div class="t" style="left:860px;top:640.95px;font-size:14.15px;font-weight:400;color:#212529;">1</div>
<div style="position:absolute;left:976.2px;top:638.4300000000001px;width:53.1px;height:21px;box-sizing:border-box;border:1px solid #3f54b0;border-radius:7px;background:#dbe2f8"></div>
<div class="t" style="left:981.3px;top:643.06px;font-size:11.3px;font-weight:700;color:#3447a6;">Iniciado</div>
<div class="t" style="left:1371.1px;top:640.95px;font-size:14.15px;font-weight:400;color:#212529;">0%</div>
<svg style="position:absolute;left:1495.85px;top:640.23px;" width="15.6" height="15.6" viewBox="0 0 512 512"><path d="M487.4 315.7l-42.6-24.6c4.3-23.2 4.3-47 0-70.2l42.6-24.6c4.9-2.8 7.1-8.6 5.5-14-11.1-35.6-30-67.8-54.7-94.6-3.8-4.1-10-5.1-14.8-2.3L380.8 110c-17.9-15.4-38.5-27.3-60.8-35.1V25.8c0-5.6-3.9-10.5-9.4-11.7-36.7-8.200-74.3-7.8-109.2 0-5.5 1.2-9.4 6.1-9.4 11.7V75c-22.2 7.9-42.8 19.8-60.8 35.1L88.7 85.5c-4.9-2.8-11-1.9-14.8 2.3-24.7 26.7-43.6 58.9-54.7 94.6-1.7 5.4.6 11.2 5.5 14L67.3 221c-4.3 23.2-4.3 47 0 70.2l-42.6 24.6c-4.9 2.8-7.1 8.6-5.5 14 11.1 35.6 30 67.8 54.7 94.6 3.8 4.1 10 5.100 14.8 2.3l42.6-24.6c17.9 15.4 38.5 27.3 60.8 35.1v49.2c0 5.6 3.9 10.5 9.4 11.7 36.7 8.2 74.3 7.8 109.2 0 5.5-1.2 9.4-6.1 9.4-11.7v-49.2c22.2-7.9 42.8-19.8 60.8-35.1l42.6 24.6c4.9 2.8 11 1.9 14.8-2.3 24.7-26.7 43.6-58.9 54.7-94.6 1.5-5.5-.7-11.3-5.6-14.1zM256 336c-44.1 0-80-35.9-80-80s35.9-80 80-80 80 35.9 80 80-35.9 80-80 80z" fill="#2d45a6"/></svg>
<svg style="position:absolute;left:1527.5px;top:643.13px;" width="17" height="11" viewBox="0 0 17 11"><path d="M0.2 1.4 H4.2 M0.2 5.5 H4.2 M0.2 9.5 H8.1" stroke="#2d45a6" stroke-width="1.6"/><circle cx="10" cy="3.7" r="3.4" fill="none" stroke="#2d45a6" stroke-width="1.6"/><path d="M12.4 6.3 L15.6 9.5" stroke="#2d45a6" stroke-width="1.8"/></svg>
<svg style="position:absolute;left:1562px;top:641.03px;" width="12" height="14.6" viewBox="0 0 12 14.6"><rect x="3.3" y="0" width="5" height="1.6" rx="0.7" fill="#fe7469"/><rect x="0" y="0.8" width="11.8" height="1.8" rx="0.6" fill="#fe7469"/><path d="M1 3.2 H11.1 V12.4 Q11.1 14.5 9 14.5 H3.1 Q1 14.5 1 12.4 Z" fill="#fe7469"/></svg>
<div style="position:absolute;left:289.5px;top:672.7px;width:1300.5px;height:1px;background:#e3e5e9"></div>
<div class="t" style="left:297.5px;top:689.12px;font-size:14.15px;font-weight:400;color:#3a4da6;">Prueba objetivos 2 DS</div>
<div class="t" style="left:860px;top:689.12px;font-size:14.15px;font-weight:400;color:#212529;">1</div>
<div style="position:absolute;left:976.4px;top:686.1px;width:65.3px;height:19.8px;box-sizing:border-box;border:1px solid #4f8a4b;border-radius:7px;background:#d4f4bf"></div>
<div class="t" style="left:981.3px;top:691.23px;font-size:11.3px;font-weight:700;color:#1f4a1f;">Finalizado</div>
<div class="t" style="left:1371.1px;top:689.12px;font-size:14.15px;font-weight:400;color:#212529;">100%</div>
<svg style="position:absolute;left:1495.85px;top:688.4000000000001px;" width="15.6" height="15.6" viewBox="0 0 512 512"><path d="M487.4 315.7l-42.6-24.6c4.3-23.2 4.3-47 0-70.2l42.6-24.6c4.9-2.8 7.1-8.6 5.5-14-11.1-35.6-30-67.8-54.7-94.6-3.8-4.1-10-5.1-14.8-2.3L380.8 110c-17.9-15.4-38.5-27.3-60.8-35.1V25.8c0-5.6-3.9-10.5-9.4-11.7-36.7-8.200-74.3-7.8-109.2 0-5.5 1.2-9.4 6.1-9.4 11.7V75c-22.2 7.9-42.8 19.8-60.8 35.1L88.7 85.5c-4.9-2.8-11-1.9-14.8 2.3-24.7 26.7-43.6 58.9-54.7 94.6-1.7 5.4.6 11.2 5.5 14L67.3 221c-4.3 23.2-4.3 47 0 70.2l-42.6 24.6c-4.9 2.8-7.1 8.6-5.5 14 11.1 35.6 30 67.8 54.7 94.6 3.8 4.1 10 5.100 14.8 2.3l42.6-24.6c17.9 15.4 38.5 27.3 60.8 35.1v49.2c0 5.6 3.9 10.5 9.4 11.7 36.7 8.2 74.3 7.8 109.2 0 5.5-1.2 9.4-6.1 9.4-11.7v-49.2c22.2-7.9 42.8-19.8 60.8-35.1l42.6 24.6c4.9 2.8 11 1.9 14.8-2.3 24.7-26.7 43.6-58.9 54.7-94.6 1.5-5.5-.7-11.3-5.6-14.1zM256 336c-44.1 0-80-35.9-80-80s35.9-80 80-80 80 35.9 80 80-35.9 80-80 80z" fill="#2d45a6"/></svg>
<svg style="position:absolute;left:1527.5px;top:691.3000000000001px;" width="17" height="11" viewBox="0 0 17 11"><path d="M0.2 1.4 H4.2 M0.2 5.5 H4.2 M0.2 9.5 H8.1" stroke="#2d45a6" stroke-width="1.6"/><circle cx="10" cy="3.7" r="3.4" fill="none" stroke="#2d45a6" stroke-width="1.6"/><path d="M12.4 6.3 L15.6 9.5" stroke="#2d45a6" stroke-width="1.8"/></svg>
<svg style="position:absolute;left:1562px;top:689.2px;" width="12" height="14.6" viewBox="0 0 12 14.6"><rect x="3.3" y="0" width="5" height="1.6" rx="0.7" fill="#fe7469"/><rect x="0" y="0.8" width="11.8" height="1.8" rx="0.6" fill="#fe7469"/><path d="M1 3.2 H11.1 V12.4 Q11.1 14.5 9 14.5 H3.1 Q1 14.5 1 12.4 Z" fill="#fe7469"/></svg>
<div style="position:absolute;left:1379.2px;top:85.5px;width:213px;height:65px;box-sizing:border-box;border:1px solid #e2e4e8;border-bottom-color:#d5d7db;border-radius:5px;background:#f9fafb;box-shadow:0 2px 5px rgba(0,0,0,0.14)"></div>
<div class="t" style="left:1391.2px;top:94.65px;font-size:14px;font-weight:400;color:#6a6d73;">Desde cero</div>
<div class="t" style="left:1391.2px;top:126.35px;font-size:14px;font-weight:400;color:#6a6d73;">Desde una evaluación anterior</div>
<div style="position:absolute;left:1416.4px;top:46.3px;width:176px;height:44.4px;box-sizing:border-box;border:3.2px solid #ff0000;border-radius:2px"></div>
<svg style="position:absolute;left:0px;top:0px;pointer-events:none" width="1600" height="710" viewBox="0 0 1600 710"><line x1="1352.7" y1="103" x2="1370.3" y2="103" stroke="#ff0000" stroke-width="2"/><path d="M1384.3 103 L1367.3 97.4 L1367.3 108.6 Z" fill="#ff0000"/></svg>
<svg style="position:absolute;left:0px;top:0px;pointer-events:none" width="1600" height="710" viewBox="0 0 1600 710"><line x1="1353" y1="134.5" x2="1371.6" y2="133.6" stroke="#ff0000" stroke-width="2"/><path d="M1385.6 133.6 L1368.6 128.0 L1368.6 139.2 Z" fill="#ff0000"/></svg>
</div>
</body></html>
